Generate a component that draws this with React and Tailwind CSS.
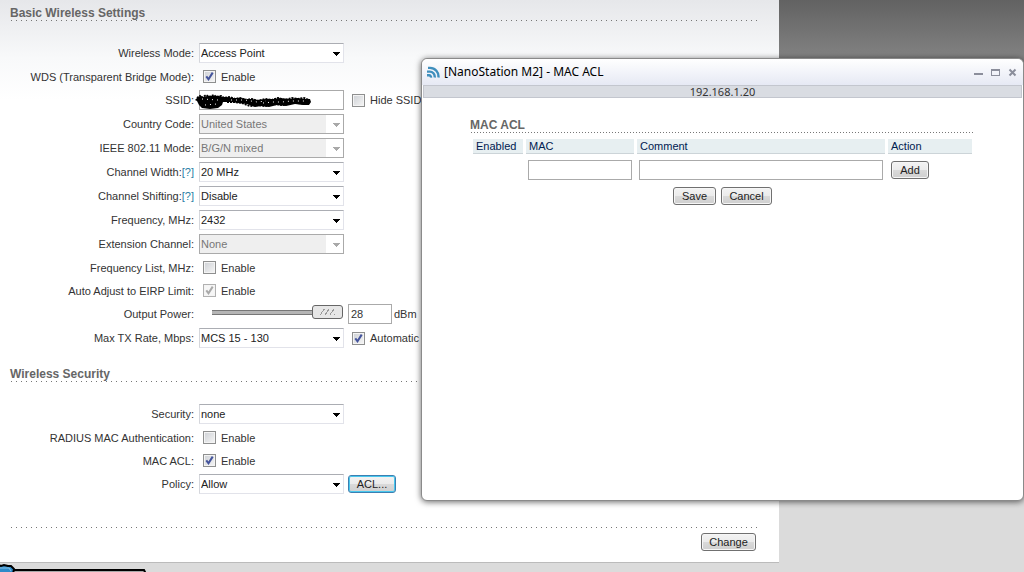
import React, { useState } from 'react';

function Arrow({ disabled }) {
  return (
    <svg
      className={`pointer-events-none absolute right-1 top-[9px] ${disabled ? 'fill-[#a9a9a9]' : 'fill-black'}`}
      width="7"
      height="4"
      viewBox="0 0 7 4"
      shapeRendering="crispEdges"
      aria-hidden="true"
    >
      <path d="M0 0h7v1H0zM1 1h5v1H1zM2 2h3v1H2zM3 3h1v1H3z" />
    </svg>
  );
}

function Select({ id, value, disabled }) {
  return (
    <span className="relative inline-block w-[145px]">
      <select
        id={id}
        disabled={disabled}
        defaultValue={value}
        className={`block h-5 w-full appearance-none border px-px leading-none ${
          disabled
            ? 'border-[#aaa] bg-[linear-gradient(90deg,#efefef_126px,#fff_126px)] text-[#777]'
            : 'border-[#e2e3ea] border-t-[#abadb3] border-l-[#d5d7dc] bg-white text-[#222]'
        }`}
      >
        <option>{value}</option>
      </select>
      <Arrow disabled={disabled} />
    </span>
  );
}

function Check({ id, label, checked, disabled }) {
  const [on, setOn] = useState(!!checked);
  return (
    <span className="flex items-center gap-[5px] pl-1">
      <span className="relative block size-[13px]">
        <input
          id={id}
          type="checkbox"
          checked={on}
          disabled={disabled}
          onChange={(e) => setOn(e.target.checked)}
          className="block size-[13px] appearance-none border border-[#8e8f8f] bg-[linear-gradient(135deg,#cdd0d5,#f6f6f6)] shadow-[inset_0_0_0_1px_#f4f4f4] disabled:border-[#b1b1b1] disabled:bg-none disabled:bg-[#f6f6f6]"
        />
        {on && (
          <svg
            className={`pointer-events-none absolute inset-0 fill-none ${disabled ? 'stroke-[#a9a9a9]' : 'stroke-[#44549c]'}`}
            width="13"
            height="13"
            viewBox="0 0 13 13"
            strokeWidth="2"
            aria-hidden="true"
          >
            <path d="M3.3 6.3l2.2 3L9.7 2.6" />
          </svg>
        )}
      </span>
      <label htmlFor={id} className="whitespace-nowrap">{label}</label>
    </span>
  );
}

function Row({ label, htmlFor, help, short, children }) {
  return (
    <div className={`flex items-center gap-[5px] ${short ? 'h-[23px]' : 'h-6'}`}>
      <div className="w-[184px] shrink-0 whitespace-nowrap text-right">
        <label htmlFor={htmlFor}>{label}:</label>
        {help && <a href="#help" className="text-[#2a7fa5]">[?]</a>}
      </div>
      <div className="flex items-center gap-1">{children}</div>
    </div>
  );
}

function SectionTitle({ children }) {
  return (
    <h2 className="h-[16px] bg-[repeating-linear-gradient(90deg,transparent_0_1px,#777_1px_2px,transparent_2px_5px)] bg-[length:100%_1px] bg-bottom bg-no-repeat text-xs leading-[16px] font-bold text-[#666]">
      {children}
    </h2>
  );
}

function Button({ focused, className = '', children }) {
  return (
    <button
      type="button"
      className={`h-[18px] rounded-[3px] border bg-[linear-gradient(#f3f3f3_0%,#ebebeb_50%,#dadada_50%,#cfcfcf_100%)] leading-none text-[#222] ${
        focused
          ? 'border-[#3c7fb1] shadow-[inset_0_0_0_1px_#48c8ee]'
          : 'border-[#707070] shadow-[inset_0_0_0_1px_#f6f6f6]'
      } ${className}`}
    >
      {children}
    </button>
  );
}

function Scribble() {
  return (
    <svg className="pointer-events-none absolute -left-[2px] top-0 overflow-visible" width="116" height="20" viewBox="0 0 116 20" aria-hidden="true">
      <path
        d="M1 7l3-1 3 1 4-1 5 0 6 0 4 1 4 0 6 1 8 0 6 1 5 0 6 1 8-1 7 0 7-1 9 1 8-1 8 1 5 0 1 3-2 3-6 0-8-1-9 2-9-1-8 2-8-1-6 1-8-3-9-1-7-1-8 0-1 3-4 3-8 1-8-1-3-3-2-4-2-1z"
        fill="#000"
      />
      <path
        d="M0 8l3-2 2 2 4-3 3 2 5-2 2 2 5-1 3 2 6-1 5 2 5-1 6 2 6-1 5 2 8-2 7 1 6-2 7 2 7-2 6 1 6-1 5 2M30 12l8 0 7 1 8 3 8-1 7 1 9-2 9 1 7-2 8 0 8 1"
        fill="none"
        stroke="#000"
        strokeWidth="2"
        strokeDasharray="2 1"
      />
      <path d="M34 10l14 0 12 2 9-1M66 13l10-1 9 0 9-1 14 0M5 9l16 1M8 15l12-1" fill="none" stroke="#fff" strokeWidth="1" strokeDasharray="1 4" />
    </svg>
  );
}

function SignalIcon() {
  return (
    <svg width="13" height="13" viewBox="0 0 13 13" fill="none" stroke="#3f8fbd" strokeWidth="2.4" aria-hidden="true">
      <path d="M1 1.9h2A8.5 8.5 0 0 1 11.4 11.5M0 5.6h2.3A5 5 0 0 1 7.6 11.6M0 9.3h2a2.2 2.2 0 0 1 2 2.4" />
    </svg>
  );
}

function AclDialog() {
  const th = 'h-[15px] border-b border-[#ccd4d8] bg-[#e7eff1] px-[3px] text-left leading-[14px] font-normal text-[#002050]';
  const field = 'block h-5 w-full border border-[#aaa] bg-white px-px';
  return (
    <section
      role="dialog"
      aria-labelledby="dialog-title"
      className="absolute top-[58px] right-0 bottom-[71px] left-[421px] flex flex-col rounded-md border border-[#8a8a8a] bg-white shadow-[0_1px_6px_rgba(0,0,0,0.6)]"
    >
      <header className="flex h-[26px] shrink-0 items-center gap-1 rounded-t-md bg-linear-to-b from-white to-[#e6e9f4] pl-[5px] pr-[6px]">
        <SignalIcon />
        <h1 id="dialog-title" className="flex-1 font-['Noto_Sans',sans-serif] text-xs text-black">[NanoStation M2] - MAC ACL</h1>
        <div className="flex items-center gap-2">
          <button type="button" aria-label="Minimize" className="block">
            <svg width="9" height="9" viewBox="0 0 9 9" aria-hidden="true"><path d="M0 5h9v2H0z" fill="#8b8e9b" /></svg>
          </button>
          <button type="button" aria-label="Maximize" className="block">
            <svg width="9" height="9" viewBox="0 0 9 9" aria-hidden="true"><path d="M0 1h9v7H0zM1 3v4h7V3z" fill="#8b8e9b" fillRule="evenodd" /></svg>
          </button>
          <button type="button" aria-label="Close" className="block">
            <svg width="9" height="9" viewBox="0 0 9 9" aria-hidden="true"><path d="M1.5 1.5l6 6M7.5 1.5l-6 6" stroke="#8b8e9b" strokeWidth="2" /></svg>
          </button>
        </div>
      </header>
      <div className="mx-px h-[13px] border border-[#c3c6ce] bg-[#d9dce2] text-center font-['Noto_Sans',sans-serif] text-[11px] leading-[11px] text-[#333]">
        192.168.1.20
      </div>
      <form className="pt-[19px] pr-12 pl-12">
        <h2 className="h-[16px] bg-[repeating-linear-gradient(90deg,transparent_0_1px,#777_1px_2px,transparent_2px_3px)] bg-[length:100%_1px] bg-bottom bg-no-repeat text-xs leading-[16px] font-bold text-[#666]">MAC ACL</h2>
        <table className="mt-[3px] w-full table-fixed border-separate border-spacing-x-[3px] border-spacing-y-[3px]">
          <colgroup>
            <col className="w-[50px]" />
            <col className="w-[108px]" />
            <col />
            <col className="w-[84px]" />
          </colgroup>
          <thead>
            <tr>
              <th className={th}>Enabled</th>
              <th className={th}>MAC</th>
              <th className={th}>Comment</th>
              <th className={th}>Action</th>
            </tr>
          </thead>
          <tbody>
            <tr>
              <td />
              <td className="px-[2px] pt-[3px]"><input aria-label="MAC" className={field} /></td>
              <td className="px-[2px] pt-[3px]"><input aria-label="Comment" className={field} /></td>
              <td className="px-[3px] pt-[3px]"><Button className="block w-[38px]">Add</Button></td>
            </tr>
          </tbody>
        </table>
        <div className="mt-1 flex justify-center gap-[5px]">
          <Button className="w-[43px]">Save</Button>
          <Button className="w-[51px]">Cancel</Button>
        </div>
      </form>
    </section>
  );
}

export default function App() {
  return (
    <div className="relative flex min-h-screen flex-col overflow-hidden bg-[#dbdbdb] bg-[linear-gradient(#626262,#828282_58px,#dbdbdb_500px)] bg-no-repeat font-['Liberation_Sans',Arial,sans-serif] text-[11px] leading-[14px] text-[#333]">
      <div className="flex">
        <main className="flex-1 border-b border-[#bbb] bg-white bg-[linear-gradient(#e6e7ea,#f8f9fa_58px,#fff_100px)] pt-[5px] pr-[21px] pb-[11px] pl-[10px]">
          <form>
            <SectionTitle>Basic Wireless Settings</SectionTitle>
            <div className="mt-5">
              <Row label="Wireless Mode" htmlFor="mode"><Select id="mode" value="Access Point" /></Row>
              <Row short label="WDS (Transparent Bridge Mode)" htmlFor="wds"><Check id="wds" label="Enable" checked /></Row>
              <Row label="SSID" htmlFor="ssid">
                <span className="relative block w-[145px]">
                  <input id="ssid" className="block h-5 w-full border border-[#aaa] bg-white px-px" />
                  <Scribble />
                </span>
                <Check id="hide" label="Hide SSID" />
              </Row>
              <Row label="Country Code" htmlFor="country"><Select id="country" value="United States" disabled /></Row>
              <Row label="IEEE 802.11 Mode" htmlFor="ieee"><Select id="ieee" value="B/G/N mixed" disabled /></Row>
              <Row label="Channel Width" htmlFor="width" help><Select id="width" value="20 MHz" /></Row>
              <Row label="Channel Shifting" htmlFor="shift" help><Select id="shift" value="Disable" /></Row>
              <Row label="Frequency, MHz" htmlFor="freq"><Select id="freq" value="2432" /></Row>
              <Row label="Extension Channel" htmlFor="ext"><Select id="ext" value="None" disabled /></Row>
              <Row short label="Frequency List, MHz" htmlFor="list"><Check id="list" label="Enable" /></Row>
              <Row short label="Auto Adjust to EIRP Limit" htmlFor="eirp"><Check id="eirp" label="Enable" checked disabled /></Row>
              <Row label="Output Power" htmlFor="power">
                <div className="flex w-[145px] justify-end pr-px pb-1">
                  <input
                    id="power"
                    type="range"
                    min="0"
                    max="28"
                    defaultValue="28"
                    className="block h-[14px] w-[131px] appearance-none bg-transparent bg-[linear-gradient(#777_0_1px,#b5b5b5_1px_4px,#777_4px_5px)] bg-[length:110px_5px] bg-left bg-no-repeat [&::-webkit-slider-thumb]:h-[14px] [&::-webkit-slider-thumb]:w-[31px] [&::-webkit-slider-thumb]:appearance-none [&::-webkit-slider-thumb]:rounded-[3px] [&::-webkit-slider-thumb]:border [&::-webkit-slider-thumb]:border-[#666] [&::-webkit-slider-thumb]:bg-[#e6e6e6] [&::-webkit-slider-thumb]:bg-[repeating-linear-gradient(125deg,transparent_0_3px,#999_3px_4px)] [&::-webkit-slider-thumb]:bg-[length:15px_6px] [&::-webkit-slider-thumb]:bg-center [&::-webkit-slider-thumb]:bg-no-repeat"
                  />
                </div>
                <input id="dbm" aria-label="Output power in dBm" defaultValue="28" className="block h-5 w-11 border border-[#aaa] bg-white px-[2px]" />
                <span className="-ml-[2px]">dBm</span>
              </Row>
              <Row label="Max TX Rate, Mbps" htmlFor="rate">
                <Select id="rate" value="MCS 15 - 130" />
                <Check id="auto" label="Automatic" checked />
              </Row>
            </div>
            <div className="mt-4"><SectionTitle>Wireless Security</SectionTitle></div>
            <div className="mt-5">
              <Row label="Security" htmlFor="sec"><Select id="sec" value="none" /></Row>
              <Row short label="RADIUS MAC Authentication" htmlFor="radius"><Check id="radius" label="Enable" /></Row>
              <Row short label="MAC ACL" htmlFor="acl"><Check id="acl" label="Enable" checked /></Row>
              <Row label="Policy" htmlFor="policy">
                <Select id="policy" value="Allow" />
                <Button focused className="w-12">ACL...</Button>
              </Row>
            </div>
            <div className="mt-[31px] h-px bg-[repeating-linear-gradient(90deg,transparent_0_1px,#777_1px_2px,transparent_2px_5px)]" />
            <div className="mt-[5px] flex justify-end pr-[2px]"><Button className="w-[55px]">Change</Button></div>
          </form>
        </main>
        <div className="w-[245px] shrink-0" />
      </div>
      <footer className="h-[9px] overflow-hidden">
        <svg className="block" width="150" height="10" viewBox="0 0 150 10" aria-hidden="true">
          <path d="M10 7h134l1 2v2H10z" fill="#a8a8a8" stroke="#000" strokeWidth="2" />
          <path d="M-2 2l3 1 3-1 4 1 3 0 2 2 1 1-1 5H-2z" fill="#2e8bc9" stroke="#000" strokeWidth="2" />
          <path d="M0 5h9l2 3" fill="none" stroke="#8cc4e8" strokeWidth="1" />
        </svg>
      </footer>
      <AclDialog />
    </div>
  );
}
